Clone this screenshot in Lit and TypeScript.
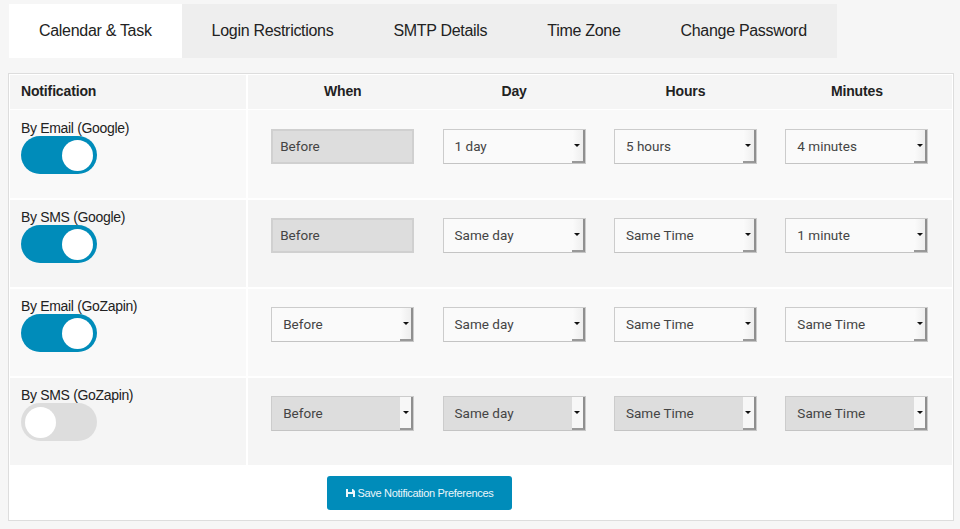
import { LitElement, html, css } from "lit";
import { customElement } from "lit/decorators.js";

type Sel = { t: string; off?: boolean; plain?: boolean };
const rows: { label: string; on: boolean; sels: Sel[] }[] = [
  { label: "By Email (Google)", on: true, sels: [{ t: "Before", plain: true, off: true }, { t: "1 day" }, { t: "5 hours" }, { t: "4 minutes" }] },
  { label: "By SMS (Google)", on: true, sels: [{ t: "Before", plain: true, off: true }, { t: "Same day" }, { t: "Same Time" }, { t: "1 minute" }] },
  { label: "By Email (GoZapin)", on: true, sels: [{ t: "Before" }, { t: "Same day" }, { t: "Same Time" }, { t: "Same Time" }] },
  { label: "By SMS (GoZapin)", on: false, sels: [{ t: "Before", off: true }, { t: "Same day", off: true }, { t: "Same Time", off: true }, { t: "Same Time", off: true }] },
];
const tabs = ["Calendar & Task", "Login Restrictions", "SMTP Details", "Time Zone", "Change Password"];

@customElement("app-root")
export class AppRoot extends LitElement {
  static styles = css`
    :host { display: block; width: 960px; height: 529px; background: #f6f6f6; overflow: hidden; font-family: "Liberation Sans", Arial, sans-serif; color: #222; box-sizing: border-box; padding: 4px 6px 0 8px; }
    * { box-sizing: border-box; }
    .tabs { display: flex; margin-left: 1px; height: 54px; width: 828px; background: #eee; }
    .tab { flex: none; white-space: nowrap; padding: 0 30px; font-size: 16px; letter-spacing: -0.3px; line-height: 54px; color: #222; }
    .tab.active { background: #fff; }
    .panel { margin-top: 15px; height: 448px; background: #fff; border: 1px solid #ddd; padding: 1px; display: flex; flex-direction: column; }
    .row { display: grid; grid-template-columns: 236px 704px; column-gap: 2px; margin-bottom: 2px; }
    .head { height: 34px; margin-bottom: 1px; }
    .head .c { background: #f5f5f5; font-weight: bold; font-size: 14px; letter-spacing: -0.15px; line-height: 32px; color: #222; }
    .head .name { padding-left: 11px; }
    .cols { display: grid; grid-template-columns: repeat(4, 143px); column-gap: 28.4px; padding-left: 23.2px; }
    .cols.body { padding-top: 19px; height: 100%; }
    .head .cols span { text-align: center; }
    .r1 { height: 88px; }
    .r { height: 87px; }
    .odd .c { background: #f9f9f9; }
    .even .c { background: #f5f5f5; }
    .r .cols.body { padding-top: 18px; }
    .name-cell { padding: 10px 0 0 11px; font-size: 14px; letter-spacing: -0.33px; line-height: 16px; color: #222; white-space: nowrap; }
    .r .name-cell { padding-top: 9px; }
    .toggle { width: 76px; height: 38px; border-radius: 19px; background: #008cba; padding: 3px 4px; display: flex; justify-content: flex-end; }
    .toggle.off { background: #ddd; justify-content: flex-start; }
    .knob { width: 31px; height: 31px; border-radius: 50%; background: #fff; margin-top: 0.5px; }
    .sel { height: 35px; width: 143px; border: 1px solid #ccc; border-bottom-color: #c4c4c4; background: #fafafa; display: flex; align-items: center; justify-content: space-between; font-family: Roboto, sans-serif; font-size: 13.5px; color: #444; padding-left: 11px; }
    .sel.off { background: #ddd; }
    .sel.plain { padding-left: 7px; border-width: 2px; border-color: #d0d0d0; }
    .txt { padding-bottom: 2px; white-space: nowrap; }
    .spin { width: 13px; height: 33px; background: linear-gradient(90deg, #fbfbfb, #eee); border-right: 2px solid #8f8f8f; border-bottom: 2px solid #999; display: flex; align-items: center; justify-content: center; flex: none; }
    .sel.off .spin { background: #f7f7f7; }
    .arrow { width: 0; height: 0; border-left: 3px solid transparent; border-right: 3px solid transparent; border-top: 3px solid #111; }
    .foot { flex: 1; padding: 9px 0 0 317px; }
    .save { width: 185px; height: 34px; border-radius: 3px; background: #008cba; color: #eaf6fb; font-size: 11px; letter-spacing: -0.31px; white-space: nowrap; display: flex; align-items: center; justify-content: center; gap: 3px; }
    .save svg { display: block; flex: none; }
  `;

  private sel(s: Sel) {
    const cls = `sel${s.off ? " off" : ""}${s.plain ? " plain" : ""}`;
    return html`<div class=${cls}>
      <span class="txt">${s.t}</span>
      ${s.plain ? null : html`<span class="spin"><span class="arrow"></span></span>`}
    </div>`;
  }

  render() {
    return html`
      <div class="tabs">
        ${tabs.map((t, i) => html`<div class="tab ${i === 0 ? "active" : ""}">${t}</div>`)}
      </div>
      <div class="panel">
        <div class="row head">
          <div class="c name">Notification</div>
          <div class="c cols"><span>When</span><span>Day</span><span>Hours</span><span>Minutes</span></div>
        </div>
        ${rows.map((r, i) => html`
          <div class="row ${i === 0 ? "r1" : "r"} ${i % 2 ? "even" : "odd"}">
            <div class="c name-cell">${r.label}<div class="toggle ${r.on ? "" : "off"}"><div class="knob"></div></div></div>
            <div class="c cols body">${r.sels.map((s) => this.sel(s))}</div>
          </div>`)}
        <div class="foot">
          <div class="save">
            <svg width="9" height="8" viewBox="0 0 9 8" aria-hidden="true"><path fill="#eaf6fb" d="M0 0h2v3h4V0h1l2 2v6H7V5H2v3H0z"/></svg>
            <span>Save Notification Preferences</span>
          </div>
        </div>
      </div>
    `;
  }
}
